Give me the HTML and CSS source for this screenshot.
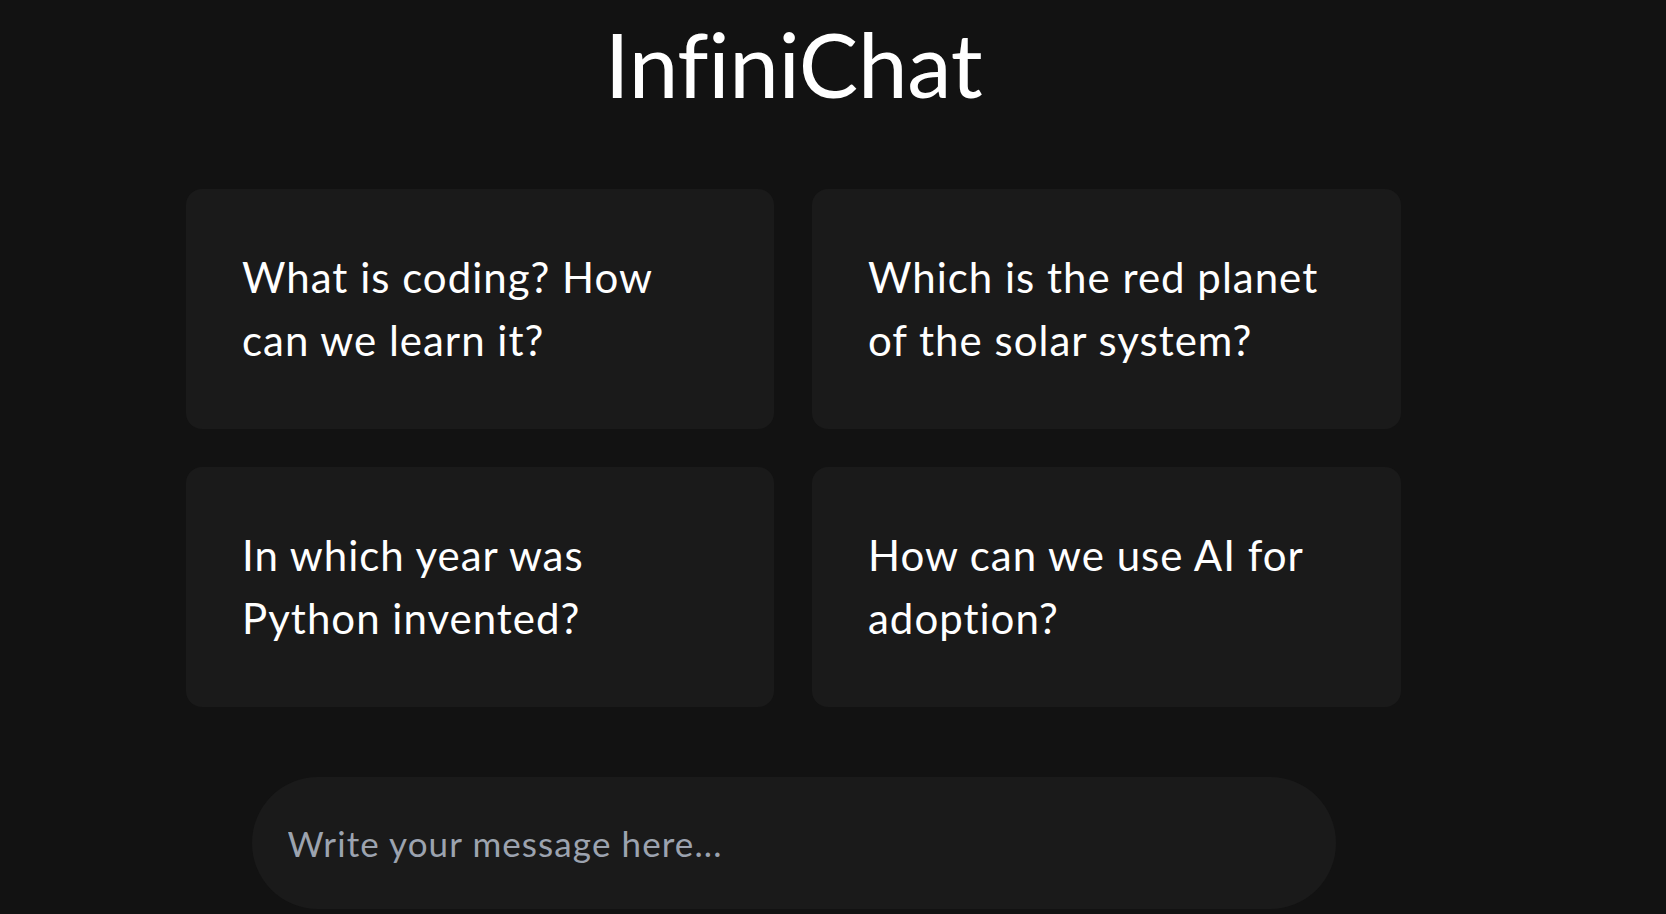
FILE: index.html
```html
<!DOCTYPE html>
<html lang="en">
<head>
<meta charset="utf-8">
<title>InfiniChat</title>
<link rel="stylesheet" href="styles.css">
</head>
<body>
<main class="page">
  <h1 class="title">InfiniChat</h1>
  <section class="suggestions">
    <div class="card">What is coding? How can we learn it?</div>
    <div class="card">Which is the red planet of the solar system?</div>
    <div class="card">In which year was Python invented?</div>
    <div class="card">How can we use AI for adoption?</div>
  </section>
  <form class="composer">
    <input class="message" type="text" placeholder="Write your message here...">
  </form>
</main>
</body>
</html>
```

FILE: styles.css
```css
html, body {
  margin: 0;
  padding: 0;
  background: #121212;
}
body {
  font-family: Lato, "Noto Sans", sans-serif;
  font-variant-ligatures: none;
  color: #ffffff;
  height: 914px;
  overflow: hidden;
}
.page {
  width: 1215px;
  margin-left: 186px;
  display: flex;
  flex-direction: column;
  align-items: center;
}
.title {
  margin: 11px 0 0 0;
  font-size: 89px;
  font-weight: 400;
  line-height: 1.2;
  text-align: center;
  letter-spacing: -0.3px;
  font-variant-ligatures: none;
}
.suggestions {
  margin-top: 71px;
  width: 100%;
  display: grid;
  grid-template-columns: 588px 589px;
  column-gap: 38px;
  row-gap: 38px;
}
.card {
  background: #1a1a1a;
  border-radius: 16px;
  padding: 57px 56px;
  font-size: 42px;
  line-height: 63px;
  letter-spacing: 1px;
  color: #ffffff;
  height: 126px;
}
.composer {
  margin: 70px 0 0 0;
  width: 1084px;
}
.message {
  box-sizing: border-box;
  width: 100%;
  height: 132px;
  border: none;
  outline: none;
  border-radius: 66px;
  background: #1a1a1a;
  padding: 0 36px;
  font-family: Lato, "Noto Sans", sans-serif;
  font-size: 35px;
  letter-spacing: 1.1px;
  color: #ffffff;
}
.message::placeholder {
  color: #9ca3af;
}
```
